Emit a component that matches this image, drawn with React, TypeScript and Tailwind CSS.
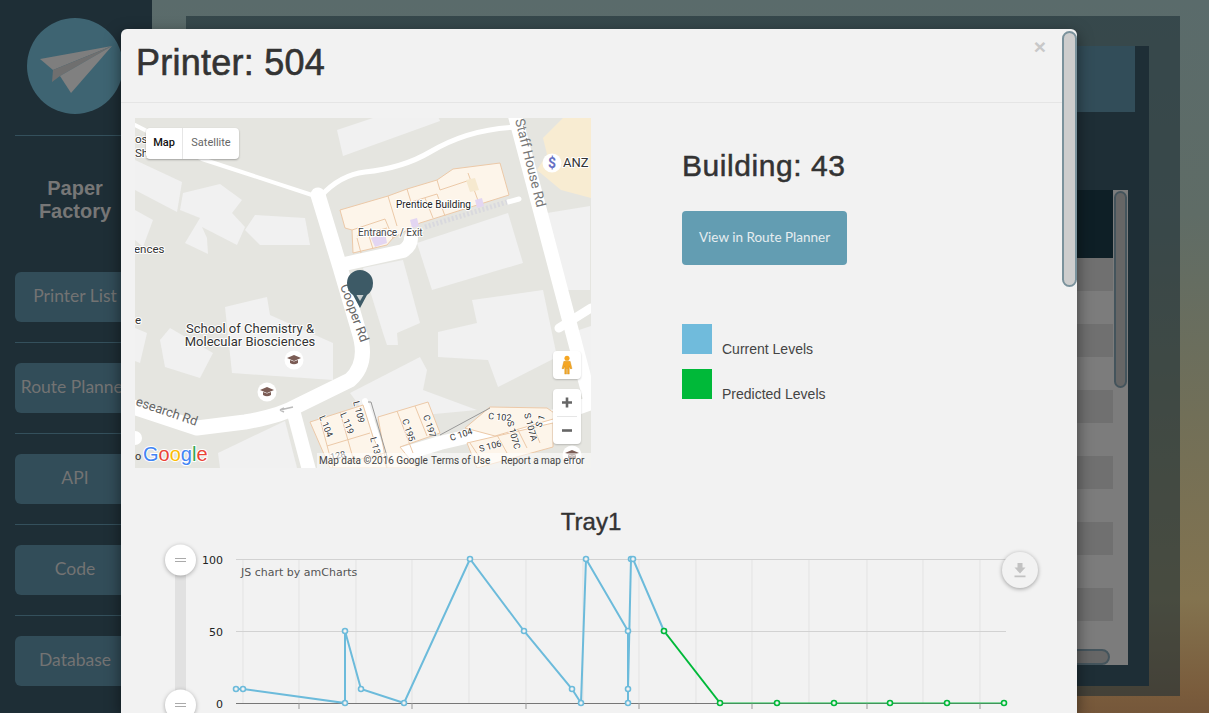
import React from "react";

const nav = ["Printer List", "Route Planner", "API", "Code", "Database"];
const rows = [0, 1, 2, 3, 4, 5];

const bldg = [
  "202,12 208,38 305,3 300,-8 262,-8",
  "48,75 85,66 107,82 97,95 110,109 102,127 67,109 72,120 73,136 50,125 65,100 45,92",
  "110,112 120,97 170,100 175,127 125,127",
  "0,42 47,64 42,94 0,72",
  "0,92 18,102 8,129 0,122",
  "282,125 373,95 388,145 297,172",
  "228,150 268,142 285,205 262,215 263,227 252,227 248,215",
  "337,182 408,172 422,239 363,269 353,242 303,239 303,214 342,205",
  "412,95 455,88 455,172 430,172",
  "90,189 132,179 135,197 198,225 198,262 97,255",
  "25,222 35,210 78,235 65,260 30,249",
  "83,335 150,303 162,350 85,350",
  "215,275 285,239 292,252 288,272 342,292 235,302",
  "435,215 456,208 456,270 450,270",
  "0,210 12,215 5,245 0,243",
];

const beige = [
  "205,92 253,78 272,71 302,62 318,51 365,45 374,77 285,105 258,120 252,127 218,135 217,112 210,110",
  "175,304 228,287 238,319 252,350 195,350",
  "243,299 293,284 305,315 265,329 282,350 252,350",
  "355,289 412,290 425,299 360,318 330,310",
  "332,325 418,305 418,329 342,350",
];

const inner = [
  "M217 112 L250 101 L258 120", "M253 78 L262 108", "M272 71 L276 84 L302 76 L310 98", "M302 62 L305 72 L335 62",
  "M333 55 L345 88", "M222 118 L252 110", "M226 135 L222 120 M238 131 L234 118", "M290 80 L298 100",
  "M185 301 L198 350", "M205 294 L218 340", "M192 328 L235 315", "M210 345 L250 335", "M262 293 L278 335",
  "M280 288 L292 318", "M345 340 L335 325", "M372 335 L362 317", "M392 330 L383 312", "M405 325 L398 308",
];

const rotLabels: [string, number, number, number][] = [
  ["L 104", 184, 299, 68],
  ["L 119", 205, 296, 68],
  ["L 109", 218, 284, 75],
  ["L 13", 235, 320, 75],
  ["C 195", 267, 302, 72],
  ["C 197", 288, 298, 72],
  ["C 104", 316, 323, -18],
  ["C 102", 353, 301, 5],
  ["S 106", 345, 334, -15],
  ["S 107C", 372, 304, 75],
  ["S 107A", 389, 296, 75],
  ["S 1", 406, 310, -70],
  ["128", 196, 342, -12],
];

const blue = [[236,689],[243,689],[345,703],[345,631],[361,689],[404,703],[470,559],[524,631],[572,689],[581,703],[586,559],[628,631],[628,703],[628,689],[631,559],[633,559],[664,631]];
const green = [[664,631],[720,703]];
const greenFlat = [[720,703],[777,703],[834,703],[890,703],[947,703],[1004,703]];
const vGrid = [243,299,356,412,469,526,583,639,696,752,809,867,923,980];
const ticks = [299,412,526,639,752,867,980];
const pts = (p: number[][]) => p.map((q) => q.join(",")).join(" ");

function PaperPlane() {
  return (
    <svg viewBox="0 0 96 96" className="h-24 w-24">
      <circle cx="48" cy="48" r="48" fill="#3e6472" />
      <polygon points="13,41 85,28 26,52" fill="#7e7e7e" />
      <polygon points="26,52 85,28 33,58 25,64" fill="#6f6f6f" />
      <polygon points="33,58 85,28 44,75" fill="#808080" />
    </svg>
  );
}

function Hat({ x, y }: { x: number; y: number }) {
  return (
    <g>
      <circle cx={x} cy={y} r="9.5" fill="#fff" />
      <polygon points={`${x - 7},${y - 2} ${x},${y - 5} ${x + 7},${y - 2} ${x},${y + 1}`} fill="#7b5c55" />
      <path d={`M${x - 4} ${y} v3 q4 2.5 8 0 v-3 l-4 1.6z`} fill="#7b5c55" />
    </g>
  );
}

function MapDrawing() {
  return (
    <svg viewBox="0 0 456 350" className="block h-[350px] w-[456px]" style={{ fontFamily: "Roboto, sans-serif" }}>
      <rect width="456" height="350" fill="#e5e5e0" />
      <polygon points="428,0 456,0 456,80 426,72 402,52 412,36 408,20" fill="#f8ecd2" />
      {bldg.map((p) => (
        <polygon key={p} points={p} fill="#f1f1f1" />
      ))}
      <g fill="none" stroke="#fff" strokeLinejoin="round" strokeLinecap="round">
        <path d="M0 7 L67 41 L177 77" strokeWidth="4" />
        <path d="M186 78 Q205 57 230 54 Q268 50 295 34 Q335 10 385 9" strokeWidth="5" />
        <path d="M183 77 L205 149 L224 214 Q234 245 215 262 L162 288 Q145 298 110 304 L62 310 L-5 288" strokeWidth="15" />
        <path d="M205 147 L268 133 Q276 128 276 120" strokeWidth="14" />
        <path d="M380 -2 L456 285" strokeWidth="14" />
        <path d="M158 292 L174 352" strokeWidth="14" />
        <path d="M255 340 L305 325 L420 298 L456 285" strokeWidth="14" />
        <path d="M424 210 L456 190" strokeWidth="9" />
        <path d="M373 84 L384 81" strokeWidth="5" />
        <path d="M230 283 L252 350" strokeWidth="6" />
      </g>
      <path d="M290 109 L372 84" stroke="#d9d9de" strokeWidth="5" strokeDasharray="2 2" fill="none" />
      {beige.map((p) => (
        <polygon key={p} points={p} fill="#fdf5ea" stroke="#ecc9a8" strokeWidth="1" />
      ))}
      <path d={inner.join(" ")} fill="none" stroke="#ecc9a8" strokeWidth="1" />
      <polygon points="340,82 347,80 349,88 342,90" fill="#e3d6f2" />
      <polygon points="275,102 282,100 284,108 277,110" fill="#e3d6f2" />
      <polygon points="236,120 250,115 252,125 240,129" fill="#e3d6f2" />
      <polygon points="331,62 340,60 344,72 335,74" fill="#f6e9cf" />
      <path d="M233 284 L236 284 L254 345" stroke="#999" strokeWidth="1" fill="none" />
      <path d="M305 317 L355 290" stroke="#999" strokeWidth="1" fill="none" />
      <path d="M145 292 L158 289 M145 292 l4 -2 M145 292 l4 2" stroke="#bbb" strokeWidth="1.5" fill="none" />

      <g paintOrder="stroke" stroke="#fff" strokeWidth="2" fill="#333" strokeLinejoin="round">
        <text x="261" y="90" fontSize="10" fill="#222" paintOrder="stroke">Prentice Building</text>
        <text x="223" y="118" fontSize="10" fill="#444" paintOrder="stroke">Entrance / Exit</text>
        <text x="-1" y="135" fontSize="11.5" paintOrder="stroke">ences</text>
        <text x="428" y="49" fontSize="13" paintOrder="stroke">ANZ</text>
        <text x="0" y="25" fontSize="11.5" paintOrder="stroke">ost</text>
        <text x="0" y="39" fontSize="11.5" paintOrder="stroke">Sh</text>
        <text x="0" y="206" fontSize="11.5" paintOrder="stroke">e</text>
        <text x="115" y="215" fontSize="13" textAnchor="middle" paintOrder="stroke">School of Chemistry &amp;</text>
        <text x="115" y="228" fontSize="13" textAnchor="middle" paintOrder="stroke">Molecular Biosciences</text>
      </g>
      <g fill="#777" fontSize="13">
        <text transform="translate(380 2) rotate(76)" fontSize="13.5">Staff House Rd</text>
        <text transform="translate(205 168) rotate(70)" fill="#666">Cooper Rd</text>
        <text transform="translate(0 287) rotate(19)" fill="#666">esearch Rd</text>
      </g>
      <g fontSize="9" fill="#333" stroke="#fff" strokeWidth="1.5" paintOrder="stroke">
        {rotLabels.map(([t, x, y, r]) => (
          <text key={t} transform={`translate(${x} ${y}) rotate(${r})`} paintOrder="stroke">{t}</text>
        ))}
      </g>
      <circle cx="417" cy="45" r="9.5" fill="#fff" />
      <text x="417" y="50" fontSize="14" fontWeight="700" fill="#6670c4" textAnchor="middle">$</text>
      <Hat x={159} y={242} />
      <Hat x={132} y={274} />
      <Hat x={437} y={337} />
      <circle cx="0" cy="320" r="7" fill="#fff" />
      <text x="0" y="342" fontSize="11" fill="#333">o</text>

      <rect x="182" y="335" width="274" height="15" fill="#fff" fillOpacity="0.55" />
      <g fontSize="10" fill="#444">
        <text x="184" y="346">Map data ©2016 Google</text>
        <text x="296" y="346">Terms of Use</text>
        <text x="366" y="346">Report a map error</text>
      </g>
      <text x="8" y="343" fontSize="20" stroke="#fff" strokeWidth="2" paintOrder="stroke" style={{ fontFamily: "'Liberation Sans', sans-serif" }}>
        <tspan fill="#4285f4">G</tspan>
        <tspan fill="#ea4335">o</tspan>
        <tspan fill="#fbbc05">o</tspan>
        <tspan fill="#4285f4">g</tspan>
        <tspan fill="#34a853">l</tspan>
        <tspan fill="#ea4335">e</tspan>
      </text>

      <path d="M212 165 a13 13 0 1 1 26 0 q0 8 -6 12 l-7 13 l-7 -13 q-6 -4 -6 -12z" fill="#3d5a66" />
      <path d="M225 183 l-3.5 -6 h7z" fill="#c9cfcf" />
    </svg>
  );
}

function Chart() {
  return (
    <svg viewBox="135 535 912 178" className="-mt-px block h-[178px] w-[912px]" style={{ fontFamily: "'DejaVu Sans', sans-serif" }}>
      {vGrid.map((x) => (
        <line key={x} x1={x} x2={x} y1="559" y2="703" stroke="#e3e3e3" />
      ))}
      <line x1="236" x2="1006" y1="559.5" y2="559.5" stroke="#d2d2d2" />
      <line x1="236" x2="1006" y1="631.5" y2="631.5" stroke="#d2d2d2" />
      <line x1="236" x2="1006" y1="703.5" y2="703.5" stroke="#777" />
      {ticks.map((x) => (
        <line key={x} x1={x} x2={x} y1="703" y2="709" stroke="#999" />
      ))}
      <g fontSize="11" fill="#222" textAnchor="end">
        <text x="223" y="564">100</text>
        <text x="223" y="636">50</text>
        <text x="223" y="708">0</text>
      </g>
      <text x="241" y="576" fontSize="11" fill="#555">JS chart by amCharts</text>

      <polyline points={pts(blue)} fill="none" stroke="#6cbbdb" strokeWidth="2" />
      <polyline points={pts(green)} fill="none" stroke="#00b939" strokeWidth="2" />
      <polyline points={pts(greenFlat)} fill="none" stroke="#00b939" strokeOpacity="0.45" strokeWidth="2" />
      {blue.map((p, i) => (
        <circle key={i} cx={p[0]} cy={p[1]} r="2.5" fill="#f2f2f2" stroke="#6cbbdb" strokeWidth="1.6" />
      ))}
      {[...green, ...greenFlat.slice(1)].map((p, i) => (
        <circle key={i} cx={p[0]} cy={p[1]} r="2.5" fill="#f2f2f2" stroke="#00b939" strokeWidth="1.6" />
      ))}

      <rect x="175" y="560" width="11" height="145" fill="#e1e1e1" />
      <g className="drop-shadow-[0_1px_2px_rgba(0,0,0,0.3)]">
        <circle cx="180.5" cy="560" r="15.5" fill="#fff" />
        <circle cx="180.5" cy="705" r="15.5" fill="#fff" />
      </g>
      <path d="M175 558.5 h11 M175 561.5 h11 M175 703.5 h11 M175 706.5 h11" stroke="#aaa" strokeWidth="1" />

      <circle cx="1020" cy="570" r="18" fill="#f2f2f2" className="drop-shadow-[0_1px_2px_rgba(0,0,0,0.35)]" />
      <path d="M1017.5 563 h5 v4.5 h3 l-5.5 6 l-5.5 -6 h3z M1014.5 575.5 h11 v1.8 h-11z" fill="#c2c2c2" />
    </svg>
  );
}

export default function App() {
  return (
    <div className="relative flex h-[713px] w-[1209px] overflow-hidden bg-[linear-gradient(180deg,#5a6b6b_0%,#5f6c66_30%,#716f58_58%,#83734f_84%,#7a5c3c_97%,#75573a_100%)]" style={{ fontFamily: "'Liberation Sans', sans-serif" }}>
      <aside className="flex w-[152px] shrink-0 flex-col bg-[#1e2e36] px-[15px] pt-[18px]">
        <div className="ml-3 h-24 w-24">
          <PaperPlane />
        </div>
        <div className="mt-[21px] h-px bg-[#34505c]" />
        <div className="mt-[41px] h-[95px] w-[120px] text-center text-[20px] font-bold leading-[23px] text-[#777]">
          Paper
          <br />
          Factory
        </div>
        {nav.map((n, i) => (
          <div key={n}>
            {i > 0 && <div className="my-5 h-px bg-[#34505c]" />}
            <div className="flex h-[50px] w-[130px] items-center justify-start overflow-hidden rounded-md bg-[#324d59] pb-[1px] pr-[10px] text-[#737373]">
              <span className="w-full whitespace-nowrap text-center text-[17.5px]" style={{ fontFamily: "Lato, sans-serif" }}>{n}</span>
            </div>
          </div>
        ))}
      </aside>

      <main className="flex-1 pb-[17px] pl-[34px] pr-[29px] pt-4">
        <div className="h-full bg-[rgba(30,46,54,0.58)] pb-[10px] pl-[30px] pr-[31px] pt-[30px]">
          <div className="flex h-full flex-col bg-[#1e2e36]">
            <div className="mr-[14px] h-[66px] shrink-0 bg-[#324d59]" />
            <div className="mr-[21px] mt-[78px] flex h-[475px] shrink-0">
              <div className="flex min-w-0 flex-1 flex-col">
                <div className="h-[68px] shrink-0 bg-[#0e1f26]" />
                <div className="h-[391px] shrink-0 overflow-hidden bg-[#7c7c7c]">
                  {rows.map((r) => (
                    <div key={r}>
                      <div className="h-[33px] bg-[#707070]" />
                      <div className="h-[33px] bg-[#7c7c7c]" />
                    </div>
                  ))}
                </div>
                <div className="flex h-4 shrink-0 bg-[#7c7c7c]">
                  <div className="mr-[3px] h-full flex-1 rounded-full border-2 border-[#44545c] bg-[#666]" />
                </div>
              </div>
              <div className="w-[15px] shrink-0 bg-[#7c7c7c] px-px pt-px">
                <div className="h-[197px] rounded-full border-2 border-[#44545c] bg-[#666]" />
              </div>
            </div>
          </div>
        </div>
      </main>

      <div className="absolute bottom-0 left-[121px] top-[29px] w-[956px] overflow-hidden rounded-t-md bg-[#f2f2f2] shadow-[0_5px_15px_rgba(0,0,0,0.5)]">
        <header className="relative h-[74px] border-b border-[#e5e5e5] px-[15px]">
          <h1 className="pt-[13px] text-[36px] leading-[42px] tracking-[0.25px] text-[#333] [-webkit-text-stroke:0.6px_#333]">Printer: 504</h1>
          <span className="absolute right-[31px] top-[6px] text-[21px] font-bold leading-6 text-[#c8c8c8]">×</span>
        </header>
        <div className="px-[14px] pt-[15px]">
          <div className="flex">
            <div className="relative h-[350px] w-[456px] shrink-0 overflow-hidden">
              <MapDrawing />
              <div className="absolute left-[11px] top-[10px] flex h-[31px] w-[93px] items-center rounded-sm bg-white text-[11px] shadow-[0_1px_2px_rgba(0,0,0,0.3)]" style={{ fontFamily: "Roboto, sans-serif" }}>
                <span className="flex h-full w-[37px] items-center justify-center border-r border-[#e6e6e6] font-medium text-[#111]">Map</span>
                <span className="flex-1 text-center text-[#666]">Satellite</span>
              </div>
              <div className="absolute left-[418px] top-[233px] flex h-7 w-7 items-center justify-center rounded-sm bg-white shadow-[0_1px_2px_rgba(0,0,0,0.2)]">
                <svg viewBox="0 0 14 22" className="h-5 w-3.5">
                  <circle cx="7" cy="3.5" r="2.8" fill="#f5a623" />
                  <path d="M3.5 7 h7 l2 8 h-2 l-1 -3 v9 h-2 v-6 h-1 v6 h-2 v-9 l-1 3 h-2z" fill="#f5a623" stroke="#c98a1a" strokeWidth="0.4" />
                </svg>
              </div>
              <div className="absolute left-[418px] top-[271px] flex h-[55px] w-7 flex-col items-center rounded-sm bg-white shadow-[0_1px_2px_rgba(0,0,0,0.2)]">
                <svg viewBox="0 0 28 27" className="h-[27px] w-7">
                  <path d="M9 13.5 h10 M14 8.5 v10" stroke="#666" strokeWidth="2.6" />
                </svg>
                <div className="h-px w-5 bg-[#e6e6e6]" />
                <svg viewBox="0 0 28 27" className="h-[27px] w-7">
                  <path d="M9 13.5 h10" stroke="#666" strokeWidth="2.6" />
                </svg>
              </div>
            </div>
            <div className="ml-[91px] flex flex-col items-start">
              <h2 className="pt-[30px] text-[30px] leading-[35px] tracking-[0.55px] text-[#333] [-webkit-text-stroke:0.5px_#333]">Building: 43</h2>
              <button className="mt-[28px] h-[54px] w-[165px] rounded bg-[#639db2] pb-[2px] text-center text-[13.5px] text-[#e6edf0]" style={{ fontFamily: "Lato, sans-serif" }}>
                View in Route Planner
              </button>
              <div className="mt-[59px] flex items-end">
                <div className="h-[30px] w-[30px] bg-[#70bbdc]" />
                <span className="ml-[10px] translate-y-[3px] text-[14px] leading-4 text-[#444]">Current Levels</span>
              </div>
              <div className="mt-[15px] flex items-end">
                <div className="h-[30px] w-[30px] bg-[#00b939]" />
                <span className="ml-[10px] translate-y-[3px] text-[14px] leading-4 text-[#444]">Predicted Levels</span>
              </div>
            </div>
          </div>
          <h3 className="mt-[40px] w-[912px] text-center text-[24px] leading-[28px] text-[#333] [-webkit-text-stroke:0.4px_#333]">Tray1</h3>
          <Chart />
        </div>
      </div>
      <div className="absolute left-[1062px] top-[31px] h-[256px] w-[15px] rounded-full border-2 border-[#7a929c] bg-[#cdcdcd]" />
    </div>
  );
}
